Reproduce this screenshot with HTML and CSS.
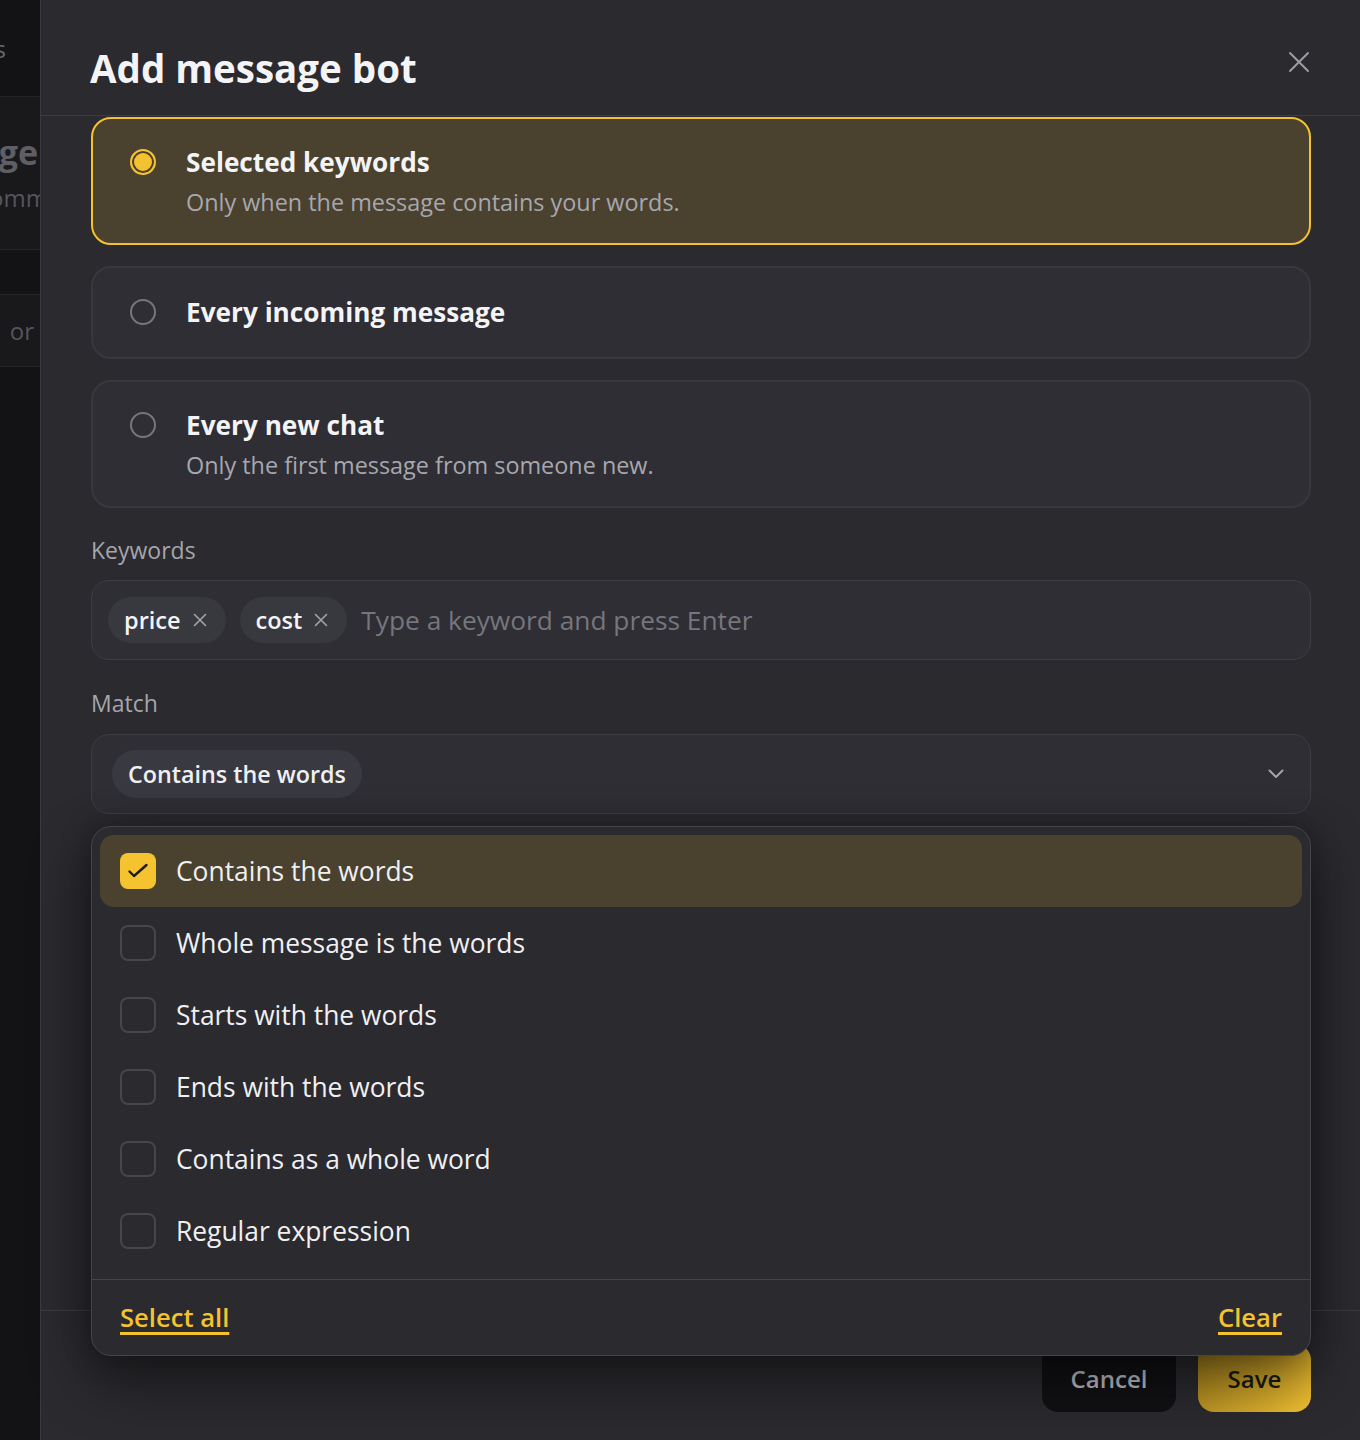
FILE: index.html
```html
<!DOCTYPE html>
<html lang="en">
<head>
    <meta charset="UTF-8">
    <meta name="viewport" content="width=device-width, initial-scale=1.0">
    <title>Add message bot</title>
    <link rel="stylesheet" href="styles.css">
</head>
<body>

<!-- page behind the dialog, mostly covered -->
<div class="page">
    <div class="page-row head"><span class="page-text first">Bots</span></div>
    <div class="page-row lit">
        <span class="page-big">Message</span>
        <span class="page-text cut">Recomm</span>
    </div>
    <div class="page-row short"></div>
    <div class="page-row lit mid"><span class="page-text">or</span></div>
</div>

<div class="modal">
    <div class="modal-header">
        <h1>Add message bot</h1>
        <button class="close-btn" aria-label="Close">
            <svg width="22" height="22" viewBox="0 0 22 22"><path d="M2 2L20 20M20 2L2 20" stroke="currentColor" stroke-width="2" stroke-linecap="round"/></svg>
        </button>
    </div>

    <div class="modal-body">
        <div class="options">
            <div class="option selected">
                <span class="radio"></span>
                <div>
                    <div class="option-title">Selected keywords</div>
                    <div class="option-desc">Only when the message contains your words.</div>
                </div>
            </div>
            <div class="option single">
                <span class="radio"></span>
                <div>
                    <div class="option-title">Every incoming message</div>
                </div>
            </div>
            <div class="option">
                <span class="radio"></span>
                <div>
                    <div class="option-title">Every new chat</div>
                    <div class="option-desc">Only the first message from someone new.</div>
                </div>
            </div>
        </div>

        <div class="field-label">Keywords</div>
        <div class="tag-input">
            <span class="tag">price <svg width="14" height="14" viewBox="0 0 14 14"><path d="M1.5 1.5L12.5 12.5M12.5 1.5L1.5 12.5" stroke="currentColor" stroke-width="1.6" stroke-linecap="round"/></svg></span>
            <span class="tag">cost <svg width="14" height="14" viewBox="0 0 14 14"><path d="M1.5 1.5L12.5 12.5M12.5 1.5L1.5 12.5" stroke="currentColor" stroke-width="1.6" stroke-linecap="round"/></svg></span>
            <span class="placeholder">Type a keyword and press Enter</span>
        </div>

        <div class="field-label match">Match</div>
        <div class="select-wrap">
            <div class="select">
                <span class="select-pill">Contains the words</span>
                <svg width="16" height="10" viewBox="0 0 16 10"><path d="M1.5 1.5L8 8L14.5 1.5" fill="none" stroke="currentColor" stroke-width="2" stroke-linecap="round" stroke-linejoin="round"/></svg>
            </div>

            <div class="dropdown">
                <div class="menu">
                    <div class="menu-item active">
                        <span class="check on">
                            <svg width="36" height="36" viewBox="0 0 36 36"><path d="M9.5 18.5l4.5 4.5L26.5 12" fill="none" stroke="#1c1c1e" stroke-width="2.4" stroke-linecap="round" stroke-linejoin="round"/></svg>
                        </span>
                        Contains the words
                    </div>
                    <div class="menu-item"><span class="check"></span>Whole message is the words</div>
                    <div class="menu-item"><span class="check"></span>Starts with the words</div>
                    <div class="menu-item"><span class="check"></span>Ends with the words</div>
                    <div class="menu-item"><span class="check"></span>Contains as a whole word</div>
                    <div class="menu-item"><span class="check"></span>Regular expression</div>
                </div>
                <div class="dropdown-footer">
                    <a href="#">Select all</a>
                    <a href="#">Clear</a>
                </div>
            </div>
        </div>
    </div>

    <div class="modal-footer">
        <button class="btn cancel">Cancel</button>
        <button class="btn save">Save</button>
    </div>
</div>

</body>
</html>
```

FILE: styles.css
```css
/* General */
body {
    margin: 0;
    background-color: #131315;
    font-family: 'Open Sans', 'Noto Sans', sans-serif;
    color: #f2f2f4;
    height: 1440px;
    overflow: hidden;
}

/* Page behind the dialog */
.page {
    width: 40px;
    overflow: hidden;
}

.page-row {
    display: flex;
    flex-direction: column;
    align-items: flex-end;
    justify-content: center;
    white-space: nowrap;
    border-bottom: 1px solid #242427;
}

.page-row.head {
    height: 96px;
}

.page-row.lit {
    background-color: #19191c;
    height: 152px;
}

.page-row.short {
    height: 44px;
}

.page-row.mid {
    height: 71px;
    padding-right: 6px;
}

.page-text {
    font-size: 24px;
    color: #55555b;
}

.page-text.first {
    margin-right: 34px;
    color: #6a6a70;
}

.page-big {
    font-size: 34px;
    font-weight: 700;
    color: #5e5e64;
    margin: -4px 2px 0 0;
}

.page-text.cut {
    margin: 6px -8px 0 0;
}

/* Dialog */
.modal {
    position: fixed;
    top: 0;
    left: 40px;
    right: 0;
    bottom: 0;
    background-color: #2a2a2f;
    border-left: 1px solid #3a3a40;
    display: flex;
    flex-direction: column;
}

.modal-header {
    height: 115px;
    border-bottom: 1px solid #3b3b41;
    padding: 0 49px;
    display: flex;
    justify-content: space-between;
    align-items: flex-start;
}

.modal-header h1 {
    margin: 42px 0 0;
    font-size: 38.5px;
    line-height: 52px;
    font-weight: 700;
    color: #f4f4f6;
}

.close-btn {
    margin: 51px 1px 0 0;
    padding: 0;
    background: none;
    border: none;
    color: #9c9ca4;
    cursor: pointer;
}

.modal-body {
    flex: 1;
    padding: 1px 49px 0 50px;
}

/* Trigger options */
.options {
    display: flex;
    flex-direction: column;
    gap: 21px;
}

.option {
    display: flex;
    align-items: flex-start;
    gap: 30px;
    padding: 26px 38px 24px 37px;
    border: 2px solid #38383e;
    border-radius: 20px;
    background-color: #2e2e34;
}

.option.single {
    padding-top: 27px;
    padding-bottom: 28px;
}

.option.selected {
    border-color: #f4c22f;
    background-color: #4a412f;
}

.radio {
    width: 26px;
    height: 26px;
    flex-shrink: 0;
    margin-top: 4px;
    border: 2px solid #76767d;
    border-radius: 50%;
    box-sizing: border-box;
}

.option.selected .radio {
    border-color: #f4c22f;
    background-color: #f4c22f;
    box-shadow: inset 0 0 0 2px #4a412f;
}

.option-title {
    font-size: 26.2px;
    line-height: 34px;
    font-weight: 700;
    color: #f4f4f6;
}

.option-desc {
    margin-top: 6px;
    font-size: 23.4px;
    line-height: 34px;
    color: #a7a7ae;
}

/* Fields */
.field-label {
    margin: 27px 0 15px;
    font-size: 23px;
    line-height: 30px;
    font-weight: 500;
    color: #a5a5ac;
}

.field-label.match {
    margin: 28px 0 16px;
}

.tag-input {
    display: flex;
    align-items: center;
    gap: 14px;
    padding: 16px 16px;
    border: 1px solid #3d3d44;
    border-radius: 18px;
    background-color: #2e2e34;
}

.tag {
    display: inline-flex;
    align-items: center;
    gap: 12px;
    height: 46px;
    padding: 0 19px 0 16px;
    border-radius: 23px;
    background-color: #38383f;
    font-size: 23.5px;
    font-weight: 600;
    color: #f4f4f6;
    box-sizing: border-box;
}

.tag svg {
    color: #a3a3aa;
}

.placeholder {
    font-size: 26.3px;
    color: #76767d;
}

.select-wrap {
    position: relative;
}

.select {
    display: flex;
    align-items: center;
    justify-content: space-between;
    padding: 15px 26px 15px 20px;
    border: 1px solid #3d3d44;
    border-radius: 18px;
    background-color: #2e2e34;
    color: #a3a3aa;
}

.select-pill {
    height: 48px;
    line-height: 48px;
    padding: 0 16px;
    border-radius: 24px;
    background-color: #393941;
    font-size: 23.3px;
    font-weight: 600;
    color: #f0f0f2;
}

/* Dropdown menu */
.dropdown {
    position: absolute;
    top: calc(100% + 12px);
    left: 0;
    right: 0;
    z-index: 10;
    border: 1px solid #44444b;
    border-radius: 20px;
    background-color: #2a2a2f;
    box-shadow: 0 24px 60px rgba(0, 0, 0, 0.45), 0 0 30px rgba(0, 0, 0, 0.25);
    overflow: hidden;
}

.menu {
    padding: 8px 8px 12px;
}

.menu-item {
    display: flex;
    align-items: center;
    gap: 20px;
    height: 72px;
    padding: 0 20px;
    border-radius: 14px;
    font-size: 26.4px;
    color: #f0f0f2;
}

.menu-item.active {
    background-color: #4a412f;
}

.check {
    width: 36px;
    height: 36px;
    flex-shrink: 0;
    border: 2px solid #46464d;
    border-radius: 8px;
    box-sizing: border-box;
}

.check.on {
    border: none;
    background-color: #f5c330;
}

.check svg {
    display: block;
}

.dropdown-footer {
    display: flex;
    justify-content: space-between;
    align-items: center;
    height: 75px;
    padding: 0 28px;
    border-top: 1px solid #44444b;
}

.dropdown-footer a {
    font-size: 25.6px;
    font-weight: 600;
    color: #f5c330;
    text-decoration: underline;
    text-decoration-thickness: 3px;
    text-underline-offset: 5px;
}

/* Footer */
.modal-footer {
    display: flex;
    justify-content: flex-end;
    gap: 22px;
    padding: 33px 49px 28px;
    border-top: 1px solid #3b3b41;
}

.btn {
    height: 68px;
    border: none;
    border-radius: 16px;
    font-family: inherit;
    font-size: 24px;
    font-weight: 600;
    cursor: pointer;
}

.btn.cancel {
    width: 134px;
    background-color: #111114;
    color: #b9b9c0;
}

.btn.save {
    width: 113px;
    background: linear-gradient(135deg, #9c7a1c, #f2c232);
    color: #1a1a1a;
}
```
